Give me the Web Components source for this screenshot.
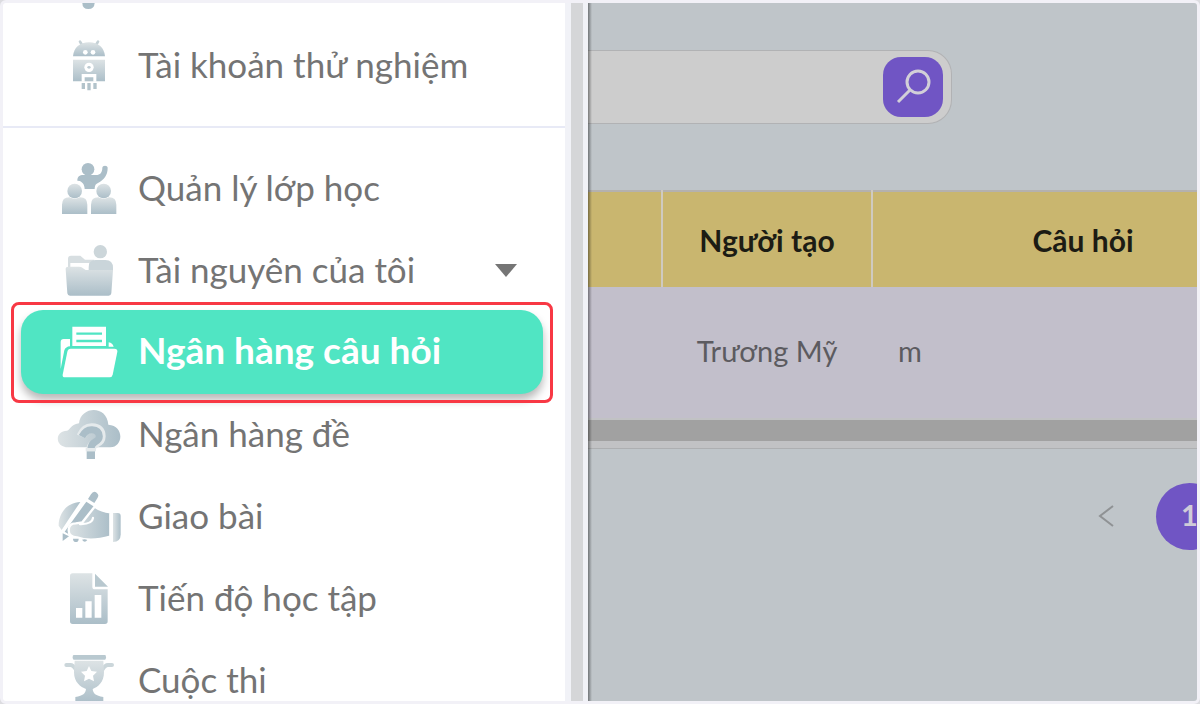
<!DOCTYPE html>
<html lang="vi">
<head>
<meta charset="utf-8">
<meta name="viewport" content="width=device-width, initial-scale=1">
<title>Ngân hàng câu hỏi</title>
<style>
  html, body { margin: 0; height: 100%; }
  body { background: #dcdce0; font-family: Lato, "Noto Sans", sans-serif; color: #747474; }
</style>
</head>
<body>
<app-shell>
  <side-menu slot="menu">
    <menu-item icon="robot">Tài khoản thử nghiệm</menu-item>
    <menu-divider></menu-divider>
    <menu-item icon="class">Quản lý lớp học</menu-item>
    <menu-item icon="folder" expandable>Tài nguyên của tôi</menu-item>
    <menu-item icon="bank" active>Ngân hàng câu hỏi</menu-item>
    <menu-item icon="cloud">Ngân hàng đề</menu-item>
    <menu-item icon="write">Giao bài</menu-item>
    <menu-item icon="report">Tiến độ học tập</menu-item>
    <menu-item icon="trophy">Cuộc thi</menu-item>
  </side-menu>
  <search-bar></search-bar>
  <question-table></question-table>
  <page-nav>1</page-nav>
</app-shell>

<script>
const define = (name, html, setup) => customElements.define(name, class extends HTMLElement {
  connectedCallback() {
    if (this.shadowRoot) return;
    const root = this.attachShadow({ mode: 'open' });
    root.innerHTML = html;
    if (setup) setup(this, root);
  }
});

/* Each icon: [viewBox, shapes]. v = vertical, h = horizontal, d = flat deep tone. */
const icons = {
  robot: ['171 114 192 168', `
    <path d="M240 125l6 10M294 125l-6 10" stroke="#c5d1d6" stroke-width="8" stroke-linecap="round"/>
    <path fill="url(#v)" d="M219 169c2-26 20-42 48-42s46 16 48 42z"/>
    <circle cx="256" cy="157" r="7" fill="#fff"/><circle cx="279" cy="157" r="7" fill="#fff"/>
    <path fill="url(#v)" d="M219 179h96v65h-96z"/>
    <circle cx="267" cy="202" r="14" fill="#fff"/><ellipse cx="267" cy="202" rx="5" ry="4" fill="#bdcbd2"/>
    <path fill="#fff" d="M245 222h44v23h-44z"/><path fill="#b2c3cb" d="M254 232h26v12h-26z"/>
    <path fill="#b2c3cb" d="M245 249h10v18h-10zM262 249h10v22h-10zM280 249h10v18h-10z"/>`],
  class: ['51 33 192 168', `
    <circle class="d" cx="144" cy="58" r="19"/>
    <path class="d" d="M112 92c0-12 7-17 18-17h38c13 0 19-8 19-22 0-8 16-8 16 0 0 23-11 36-29 46-8 3-9 8-10 18h-30c-1-14-6-20-15-24z"/>
    <circle cx="104" cy="123" r="27" fill="#fff"/><circle cx="191" cy="123" r="27" fill="#fff"/>
    <circle fill="url(#v)" cx="104" cy="123" r="22"/><circle fill="url(#v)" cx="191" cy="123" r="22"/>
    <path fill="url(#v)" d="M66 192v-28q0-22 22-22 16 8 32 0 22 0 22 22v28zM153 192v-28q0-22 22-22 16 8 32 0 22 0 22 22v28z"/>`],
  folder: ['51 279 192 168', `
    <circle cx="181" cy="305" r="20" fill="#ccd6da"/>
    <path fill="#d7dee1" d="M84 358v-32q0-9 9-9h28l14 12h28v31z"/>
    <path fill="#fff" d="M91 339h57v21H91z"/>
    <path fill="#cad5da" d="M146 361v-10q0-21 21-21h29q23 0 23 24v7z"/>
    <path fill="url(#v)" d="M77 357q0-7 8-7h32q7 0 11 4l9 6h82l-5 70q-1 7-8 7H90q-7 0-8-7z"/>`],
  bank: ['171 102 192 168', `
    <path fill="#fff" d="M182 237v-81q0-9 9-9h19v22q-13 1-17 12zM326 157q12 2 15 13h-15z"/>
    <path fill="#fff" d="M217 110h101v58H217z"/>
    <path stroke="#50e5c3" stroke-width="7" d="M229 131h77M229 153h77"/>
    <path fill="#fff" d="M212 176h131q10 0 9 9l-14 69q-2 8-9 8H195q-8 0-7-8l14-69q2-9 10-9z"/>`],
  cloud: ['171 351 192 168', `
    <path fill="url(#h)" d="M205 472c-42 0-41-50-4-50 10 0 8-18 36-22 5-52 84-56 88 4 50 4 44 68 6 68z"/>
    <path d="M243 439q12-26 33-25 26 1 27 25 0 14-16 21-14 5-14 19" fill="none" stroke="#e5eaec" stroke-width="28"/>
    <path d="M246 440q11-22 30-21 21 1 22 20 0 11-13 17-12 6-12 22" fill="none" stroke="#abbec8" stroke-width="21"/>
    <path fill="#e5eaec" d="M257 474h31v10h-31z"/><path fill="#abbec8" d="M260 484h25v23h-25z"/>`],
  write: ['51 27 192 168', `
    <path fill="url(#h)" d="M121 66C80 68 56 100 56 137l9 13 22-34z"/>
    <path d="M138 60L66 160l0 24 22-8 80-94z" fill="#fff" stroke="#fff" stroke-width="12"/>
    <path class="d" d="M139 65l-65 90 22 14 69-87zM144 57l9-14q7-12 17-5 9 7 2 17l-9 14zM68 160l19 9-19 14z"/>
    <path fill="url(#h)" stroke="#fff" stroke-width="7" d="M86 151q0-21 21-21l20-3 37-47q19 14 47 17v73q-60 17-100 2-25 0-25-21z"/>
    <path fill="none" stroke="#fff" stroke-width="7" stroke-linecap="round" d="M120 132q37 1 39-18"/>
    <path fill="url(#h)" d="M219 99h14q9 0 9 9v55q0 23-23 23z"/>
    <path class="d" d="M99 176h17q0 11-10 10-7-1-7-10zM126 179q9-3 16 1-8 11-16-1z"/>`],
  report: ['51 273 192 168', `
    <path fill="url(#v)" d="M98 280h59v40q0 8 8 8h38v96q0 8-8 8H98q-8 0-8-8V288q0-8 8-8z"/>
    <path fill="#b8c8cf" d="M165 281l39 39h-39z"/>
    <path fill="#fff" d="M108 384h19v29h-19zM136 364h19v49h-19zM164 345h20v68h-20z"/>`],
  trophy: ['51 519 192 168', `
    <path fill="#b9c9d0" d="M101 525h94q3 0 3 7t-3 7h-94q-3 0-3-7t3-7z"/>
    <path fill="none" stroke="#cbd6da" stroke-width="12" stroke-linecap="round" d="M79 555h12q9 0 17 14M216 555h-12q-9 0-17 14"/>
    <path fill="url(#v)" d="M104 542h86l2 35c0 30-18 44-34 50 2 14 8 20 32 24v20h-84v-20c24-4 30-10 32-24-16-6-36-20-36-50z"/>
    <path fill="#fff" d="M147 558l7 15 17 2-12 12 3 17-15-8-15 8 3-17-12-12 17-2z"/>`],
  pin: ['171 9 192 66', `<path class="d" d="M247 9h37q-1 18-19 18t-18-18z"/>`]
};

define('app-icon', `
  <style>
    :host { display: block; flex: none; width: 64px; }
    svg { display: block; width: 100%; }
    .d { fill: #abbec8; }
  </style>
  <svg aria-hidden="true" fill="none">
    <defs>
      <linearGradient id="v" x2="0" y2="1"><stop stop-color="#dde3e5"/><stop offset="1" stop-color="#abbec8"/></linearGradient>
      <linearGradient id="h"><stop stop-color="#dde3e5"/><stop offset="1" stop-color="#abbec8"/></linearGradient>
    </defs>
    <g></g>
  </svg>`, (host, root) => {
  const [box, shapes] = icons[host.getAttribute('name')];
  root.querySelector('svg').setAttribute('viewBox', box);
  root.querySelector('g').innerHTML = shapes;
});

define('menu-divider', `
  <style>:host { display: block; height: 2px; margin: 19px 0 20px; background: #e8eaf6; }</style>`);

define('menu-item', `
  <style>
    :host { display: block; padding: 0 22px 0 18px; }
    a, button {
      box-sizing: border-box; width: 100%; height: 82px; padding: 0 26px 0 36px;
      display: flex; align-items: center; gap: 17px;
      border: 0; background: none; color: inherit; text-decoration: none;
      font: inherit; font-size: 35px; line-height: 44px; text-align: left; white-space: nowrap;
    }
    .label { flex: 1; padding-bottom: 4px; }
    .caret { width: 22px; height: 13px; margin-bottom: 2px; }
    :host([active]) { position: relative; margin-top: -2px; }
    :host([active]) a {
      height: 84px; border-radius: 22px; background: #50e5c3; color: #fff; font-size: 37px; font-weight: 700;
      box-shadow: 0 6px 8px rgba(0, 0, 0, .28);
    }
    :host([active])::after {
      content: ""; position: absolute; inset: -8px 12px -9px 8px;
      border: 3px solid #f83844; border-radius: 8px;
    }
  </style>`, (host, root) => {
  const icon = `<app-icon name="${host.getAttribute('icon')}"></app-icon><span class="label"><slot></slot></span>`;
  const current = host.hasAttribute('active') ? ' aria-current="page"' : '';
  root.innerHTML += host.hasAttribute('expandable')
    ? `<button type="button" aria-expanded="false">${icon}<svg class="caret" viewBox="0 0 22 13" aria-hidden="true"><path fill="#757575" d="M0 0h22L11 13z"/></svg></button>`
    : `<a href="#"${current}>${icon}</a>`;
});

define('side-menu', `
  <style>
    :host { display: flex; flex: none; width: 585px; background: #f1f2f7; }
    nav { flex: 1; background: #fff; overflow: hidden; }
    .track { width: 12px; margin: 0 5px 0 6px; background: #d5d6d8; }
    .previous { padding-left: 54px; }
  </style>
  <nav aria-label="Menu">
    <div class="previous"><app-icon name="pin"></app-icon></div>
    <slot></slot>
  </nav>
  <div class="track"></div>`);

define('search-bar', `
  <style>
    :host { display: block; padding: 47px 245px 66px 0; }
    form {
      display: flex; align-items: center; padding: 6px 8px 6px 0;
      border: 1px solid #b1b2b4; border-left: 0; border-radius: 0 24px 24px 0; background: #cdcdcd;
    }
    input { flex: 1; min-width: 0; padding: 0 24px; border: 0; outline: 0; background: none; color: #444; font: inherit; font-size: 29px; }
    button { width: 60px; height: 60px; padding: 0; border: 0; border-radius: 18px; background: #7055c4; }
    svg { display: block; width: 60px; }
  </style>
  <form role="search">
    <input type="search" aria-label="Tìm kiếm">
    <button type="button" aria-label="Tìm kiếm">
      <svg viewBox="0 0 60 60" fill="none" stroke="#d2cfd8" stroke-width="3"><circle cx="35" cy="25" r="11"/><path d="M27 33L15 45"/></svg>
    </button>
  </form>`);

define('question-table', `
  <style>
    :host { display: block; overflow: hidden; border-bottom: 1px solid #adafb1; background: #c1c2c4; }
    table { width: 705px; table-layout: fixed; border-collapse: collapse; border-top: 2px solid #b4b1ae; font-size: 29px; line-height: 36px; }
    th, td { box-sizing: border-box; padding: 0 26px; white-space: nowrap; }
    th { height: 96px; background: #c9b66f; color: #1c1c14; font-size: 30px; font-weight: 700; }
    th + th { border-left: 2px solid #cfcac0; }
    td { height: 131px; padding-bottom: 4px; background: #c2bfcb; color: #5c5b60; }
    .who { text-align: center; }
    .bar { height: 21px; margin: 2px 0 7px; background: #a1a1a1; }
  </style>
  <table>
    <colgroup><col style="width:74px"><col style="width:210px"><col></colgroup>
    <thead><tr><th></th><th>Người tạo</th><th>Câu hỏi</th></tr></thead>
    <tbody><tr><td></td><td class="who">Trương Mỹ</td><td>m</td></tr></tbody>
  </table>
  <div class="bar"></div>`);

define('page-nav', `
  <style>
    :host { display: flex; justify-content: flex-end; align-items: center; gap: 37px; margin: 34px -26px 0 0; }
    button { display: grid; place-items: center; padding: 0; border: 0; background: none; font: inherit; }
    .prev { width: 26px; height: 64px; padding-bottom: 2px; }
    .prev svg { width: 16px; height: 22px; }
    .page { width: 67px; height: 67px; padding-bottom: 4px; border-radius: 50%; background: #7055c4; color: #cfcbd8; font-size: 29px; font-weight: 700; }
  </style>
  <button class="prev" type="button" aria-label="Trang trước">
    <svg viewBox="0 0 16 22" fill="none" stroke="#8f9294" stroke-width="2"><path d="M15 1L2 11l13 10"/></svg>
  </button>
  <button class="page" type="button" aria-current="page"><slot></slot></button>`);

define('app-shell', `
  <style>
    :host {
      box-sizing: border-box; display: flex; height: 100vh; overflow: hidden;
      border: 3px solid #f2f1f7; border-radius: 6px; background: #f2f1f7;
    }
    main { flex: 1; min-width: 0; overflow: hidden; background: #bfc5c9; position: relative; }
    main::before { content: ""; position: absolute; z-index: 1; inset: 0 auto 0 0; width: 4px; background: linear-gradient(90deg, rgba(0, 0, 0, .4), transparent); }
  </style>
  <slot name="menu"></slot>
  <main><slot></slot></main>`);
</script>
</body>
</html>
